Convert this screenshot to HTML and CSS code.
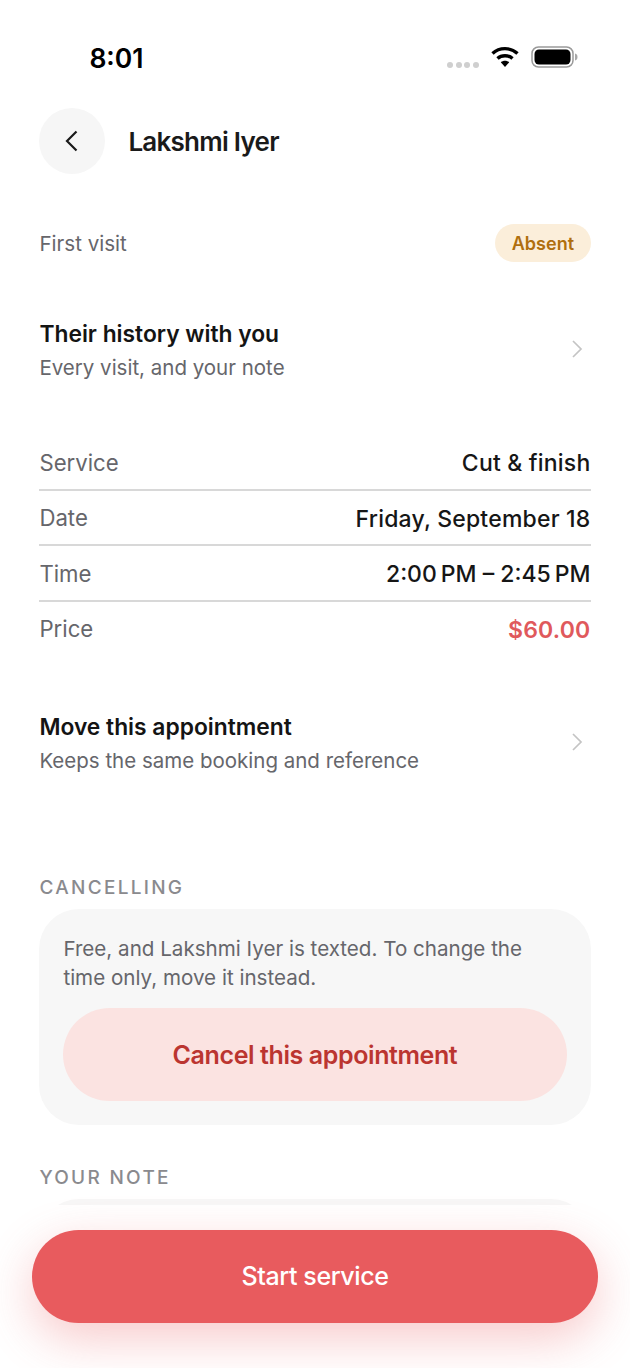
FILE: index.html
```html
<!DOCTYPE html>
<html lang="en">
<head>
  <meta charset="UTF-8" />
  <meta name="viewport" content="width=device-width, initial-scale=1" />
  <title>Lakshmi Iyer</title>
  <link rel="stylesheet" href="styles.css">
</head>
<body>
  <div class="pantalla">
    <div class="status">
      <span class="hora">8:01</span>
      <div class="status-iconos">
        <div class="senal"><i></i><i></i><i></i><i></i></div>
        <svg class="wifi" width="28" height="22" viewBox="0 0 28 22">
          <path d="M1.5 7.5C8.5 1 19.5 1 26.5 7.5" fill="none" stroke="#000" stroke-width="3.4"/>
          <path d="M6.5 12.5C10.5 8.8 17.5 8.8 21.5 12.5" fill="none" stroke="#000" stroke-width="3.4"/>
          <path d="M9.8 16.3C12.2 14.3 15.8 14.3 18.2 16.3L14 21z" fill="#000"/>
        </svg>
        <svg class="bateria" width="48" height="24" viewBox="0 0 48 24">
          <rect x="1" y="2" width="41" height="20" rx="6.5" fill="none" stroke="#9a9a9a" stroke-width="1.5"/>
          <rect x="3.5" y="4.5" width="36" height="15" rx="4.5" fill="#000"/>
          <path d="M44 8.5c1.8.5 2.5 1.8 2.5 3.5s-.7 3-2.5 3.5z" fill="#a8a8a8"/>
        </svg>
      </div>
    </div>

    <div class="cabecera">
      <div class="atras">
        <svg width="16" height="24" viewBox="0 0 16 24"><path d="M12.5 2.5L3 12l9.5 9.5" fill="none" stroke="#1a1a1a" stroke-width="2.2"/></svg>
      </div>
      <h1>Lakshmi Iyer</h1>
    </div>

    <div class="visita">
      <span class="gris">First visit</span>
      <span class="estado">Absent</span>
    </div>

    <div class="enlace enlace-historia">
      <div>
        <div class="enlace-titulo">Their history with you</div>
        <div class="gris enlace-sub">Every visit, and your note</div>
      </div>
      <svg class="flecha" width="12" height="20" viewBox="0 0 12 20"><path d="M2 2l8 8-8 8" fill="none" stroke="#c4c4c4" stroke-width="1.7"/></svg>
    </div>

    <div class="detalle">
      <div class="fila"><span class="gris">Service</span><b>Cut &amp; finish</b></div>
      <div class="fila"><span class="gris">Date</span><b>Friday, September 18</b></div>
      <div class="fila"><span class="gris">Time</span><b class="rango">2:00&#8239;PM – 2:45&#8239;PM</b></div>
      <div class="fila"><span class="gris">Price</span><b class="precio">$60.00</b></div>
    </div>

    <div class="enlace enlace-mover">
      <div>
        <div class="enlace-titulo">Move this appointment</div>
        <div class="gris enlace-sub">Keeps the same booking and reference</div>
      </div>
      <svg class="flecha" width="12" height="20" viewBox="0 0 12 20"><path d="M2 2l8 8-8 8" fill="none" stroke="#c4c4c4" stroke-width="1.7"/></svg>
    </div>

    <h2 class="seccion seccion-cancelar">CANCELLING</h2>
    <div class="tarjeta">
      <p>Free, and Lakshmi Iyer is texted. To change the time only, move it instead.</p>
      <button class="btn-cancelar">Cancel this appointment</button>
    </div>

    <h2 class="seccion seccion-nota">YOUR NOTE</h2>
    <div class="tarjeta tarjeta-nota"></div>

    <div class="pie">
      <button class="btn-inicio">Start service</button>
    </div>
  </div>
</body>
</html>
```

FILE: styles.css
```css
html, body {
  margin: 0;
  padding: 0;
  background-color: #fff;
}
.pantalla {
  position: relative;
  width: 630px;
  height: 1368px;
  overflow: hidden;
  box-sizing: border-box;
  padding: 0 39.5px 0 39.4px;
  font-family: Inter, "Liberation Sans", sans-serif;
  color: #1a1a1a;
}
.gris {
  color: #66666b;
}
.status {
  height: 108px;
  display: flex;
  justify-content: space-between;
  align-items: flex-start;
  padding: 42px 12px 0 50px;
  box-sizing: border-box;
}
.hora {
  font-size: 26.5px;
  line-height: 32px;
  font-weight: 600;
  color: #000;
}
.status-iconos {
  display: flex;
  align-items: center;
  margin-top: 3px;
}
.senal {
  display: flex;
  gap: 2.5px;
  margin: 16px 12px 0 0;
}
.senal i {
  width: 6px;
  height: 6px;
  border-radius: 50%;
  background-color: #cfcfcf;
}
.wifi {
  margin-right: 12px;
}
.cabecera {
  display: flex;
  align-items: center;
  gap: 23px;
}
.atras {
  width: 66px;
  height: 66px;
  border-radius: 50%;
  background-color: #f6f6f6;
  display: flex;
  align-items: center;
  justify-content: center;
}
h1 {
  margin: 0;
  font-size: 26px;
  font-weight: 600;
  letter-spacing: -0.75px;
}
.visita {
  margin-top: 50px;
  height: 38px;
  display: flex;
  justify-content: space-between;
  align-items: center;
  font-size: 20.6px;
}
.estado {
  height: 38px;
  line-height: 39px;
  padding: 0 16.5px;
  border-radius: 19px;
  background-color: #fbeeda;
  color: #b06f0e;
  font-size: 18px;
  font-weight: 600;
}
.enlace {
  display: flex;
  justify-content: space-between;
  align-items: center;
  padding-right: 8px;
}
.enlace-historia {
  margin-top: 57px;
}
.enlace-mover {
  margin-top: 55px;
}
.flecha {
  margin-bottom: 4px;
}
.enlace-titulo {
  font-size: 22.8px;
  line-height: 30px;
  font-weight: 600;
  color: #141414;
}
.enlace-sub {
  font-size: 20.5px;
  line-height: 28px;
  margin-top: 5px;
}
.detalle {
  margin-top: 53px;
}
.fila {
  height: 55.5px;
  box-sizing: border-box;
  padding-top: 1px;
  display: flex;
  justify-content: space-between;
  align-items: center;
  border-bottom: 2px solid #d8d8d8;
  font-size: 22.2px;
}
.fila:last-child {
  padding-top: 0;
  border-bottom: none;
}
.fila:last-child .gris {
  padding-bottom: 2px;
}
.fila b {
  padding-top: 2px;
  font-size: 23px;
  font-weight: 500;
  letter-spacing: 0.2px;
  color: #161616;
}
.fila .rango {
  letter-spacing: 0;
}
.fila .precio {
  font-weight: 600;
  color: #e0595c;
}
.seccion {
  margin: 0;
  font-size: 19px;
  line-height: 24px;
  font-weight: 500;
  letter-spacing: 2.3px;
  color: #8a8a8e;
}
.seccion-cancelar {
  margin-top: 101px;
}
.seccion-nota {
  margin-top: 41px;
}
.tarjeta {
  margin-top: 9px;
  background-color: #f7f7f7;
  border-radius: 40px;
  padding: 26px 24px 24px;
}
.tarjeta p {
  margin: 0 0 16px;
  font-size: 20.6px;
  line-height: 28.5px;
  color: #66666b;
}
button {
  display: block;
  width: 100%;
  border: none;
  font-family: inherit;
  font-weight: 600;
  letter-spacing: -0.4px;
}
.btn-cancelar {
  height: 93px;
  border-radius: 46.5px;
  background-color: #fbe3e1;
  color: #bb3530;
  font-size: 25px;
}
.tarjeta-nota {
  height: 200px;
}
.pie {
  position: absolute;
  left: 0;
  right: 0;
  bottom: 0;
  height: 163px;
  padding: 0 32px;
  box-sizing: border-box;
  background-color: #fff;
}
.btn-inicio {
  margin-top: 25px;
  height: 93px;
  padding-bottom: 3px;
  border-radius: 46.5px;
  background-color: #e85b5e;
  color: #fff;
  font-size: 25px;
  font-weight: 500;
  box-shadow: 0 16px 48px rgba(232, 91, 94, 0.32);
}
```
